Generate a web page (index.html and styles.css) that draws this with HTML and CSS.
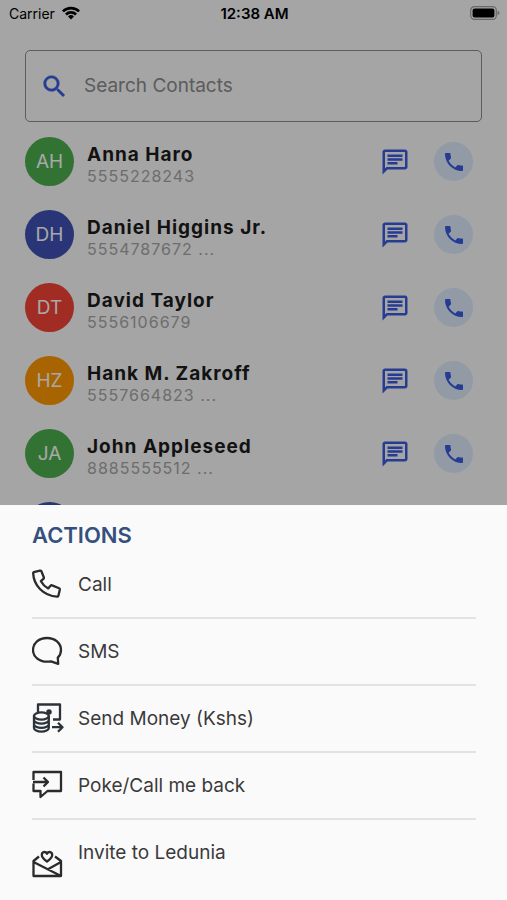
FILE: index.html
```
<!DOCTYPE html>
<html lang="en">
<head>
	<meta charset="UTF-8">
	<meta name="viewport" content="width=device-width, initial-scale=1">
	<title>Contacts</title>
	<link rel="stylesheet" href="styles.css">
</head>
<body>
	<!-- shared icons -->
	<svg class="sprite" aria-hidden="true">
		<symbol id="chat" viewBox="0 0 24 24">
			<path d="M4 4h16v12H5.17L4 17.17V4m0-2c-1.1 0-1.99.9-1.99 2L2 22l4-4h14c1.1 0 2-.9 2-2V4c0-1.1-.9-2-2-2H4zm2 10h8v2H6v-2zm0-3h12v2H6V9zm0-3h12v2H6V6z"/>
		</symbol>
		<symbol id="phone" viewBox="0 0 24 24">
			<path d="M6.62 10.79c1.44 2.83 3.76 5.14 6.59 6.59l2.2-2.2c.27-.27.67-.36 1.02-.24 1.12.37 2.33.57 3.57.57.55 0 1 .45 1 1V20c0 .55-.45 1-1 1-9.39 0-17-7.61-17-17 0-.55.45-1 1-1h3.5c.55 0 1 .45 1 1 0 1.25.2 2.45.57 3.57.11.35.03.74-.25 1.02l-2.2 2.2z"/>
		</symbol>
	</svg>
	<div class="app">
		<div class="screen">
			<header class="status">
				<div class="carrier">
					<span>Carrier</span>
					<svg class="wifi" viewBox="0 0 18 14">
						<path d="M0 4.4a13 13 0 0 1 18 0L16.2 6.3a10.4 10.4 0 0 0-14.4 0z"/>
						<path d="M3 7.5a8.7 8.7 0 0 1 12 0l-1.9 1.9a6 6 0 0 0-8.2 0z"/>
						<path d="M6 10.5a4.4 4.4 0 0 1 6 0L9 13.6z"/>
					</svg>
				</div>
				<time>12:38 AM</time>
				<div class="power">
					<svg class="battery" viewBox="0 0 30 14">
						<rect x=".7" y=".7" width="25.6" height="12.6" rx="3.6" fill="none" stroke="#a0a0a0" stroke-width="1.2"/>
						<rect x="2.6" y="2.6" width="21.8" height="8.8" rx="2"/>
						<path d="M27.6 4.8c2.4.8 2.4 3.6 0 4.4z" fill="#a0a0a0"/>
					</svg>
				</div>
			</header>
			<label class="search">
				<svg viewBox="0 0 24 24" aria-hidden="true">
					<path d="M15.5 14h-.79l-.28-.27A6.471 6.471 0 0 0 16 9.5 6.5 6.5 0 1 0 9.5 16c1.61 0 3.09-.59 4.23-1.57l.27.28v.79l5 4.99L20.49 19l-4.99-5zm-6 0C7.01 14 5 11.99 5 9.5S7.01 5 9.5 5 14 7.01 14 9.5 11.99 14 9.5 14z"/>
				</svg>
				<input type="text" placeholder="Search Contacts" aria-label="Search Contacts">
			</label>
			<ul class="contacts">
				<li>
					<span class="avatar green">AH</span>
					<div class="info"><h3>Anna Haro</h3><p>5555228243</p></div>
					<button class="msg" aria-label="Message Anna Haro"><svg><use href="#chat"/></svg></button>
					<button class="dial" aria-label="Call Anna Haro"><svg><use href="#phone"/></svg></button>
				</li>
				<li>
					<span class="avatar blue">DH</span>
					<div class="info"><h3>Daniel Higgins Jr.</h3><p>5554787672 ...</p></div>
					<button class="msg" aria-label="Message Daniel Higgins Jr."><svg><use href="#chat"/></svg></button>
					<button class="dial" aria-label="Call Daniel Higgins Jr."><svg><use href="#phone"/></svg></button>
				</li>
				<li>
					<span class="avatar red">DT</span>
					<div class="info"><h3>David Taylor</h3><p>5556106679</p></div>
					<button class="msg" aria-label="Message David Taylor"><svg><use href="#chat"/></svg></button>
					<button class="dial" aria-label="Call David Taylor"><svg><use href="#phone"/></svg></button>
				</li>
				<li>
					<span class="avatar orange">HZ</span>
					<div class="info"><h3>Hank M. Zakroff</h3><p>5557664823 ...</p></div>
					<button class="msg" aria-label="Message Hank M. Zakroff"><svg><use href="#chat"/></svg></button>
					<button class="dial" aria-label="Call Hank M. Zakroff"><svg><use href="#phone"/></svg></button>
				</li>
				<li>
					<span class="avatar green">JA</span>
					<div class="info"><h3>John Appleseed</h3><p>8885555512 ...</p></div>
					<button class="msg" aria-label="Message John Appleseed"><svg><use href="#chat"/></svg></button>
					<button class="dial" aria-label="Call John Appleseed"><svg><use href="#phone"/></svg></button>
				</li>
				<li>
					<span class="avatar blue"></span>
				</li>
			</ul>
			<div class="scrim"></div>
		</div>
		<section class="sheet">
			<h2>ACTIONS</h2>
			<ul class="actions">
				<li><button>
					<svg viewBox="0 1 32 32">
						<path d="M1.800 4.200 8 2.600q1-.2 1.400.7l2.400 6q.3 1-.4 1.600l-2.500 2.300q2.600 4.700 7.300 7.200l2.300-2.700q.7-.7 1.600-.3l7 2.900q.9.4.7 1.400l-1.400 6q-.3 1.100-1.400 1C11.500 27.700 1.600 17.600 1.200 5.400q-.1-1 .6-1.200z"/>
					</svg>
					<span>Call</span>
				</button></li>
				<li><button>
					<svg viewBox="0 1 32 32">
						<path d="M15 3C7 3 1 8.200 1 14.900S7 26.700 15 26.700q2.200 0 4-.3l7.200 2.400-.4-6.200q3.200-3.200 3.200-7.700C29 8.200 23 3 15 3z"/>
					</svg>
					<span>SMS</span>
				</button></li>
				<li><button>
					<svg class="money" viewBox="0 1 32 32">
						<path d="M6 10V2.500h22V17.500h-7M2 13.500V26c0 2 3.300 3.600 7.400 3.600s7.400-1.600 7.400-3.600V13.500M2 18c0 2 3.300 3.600 7.400 3.600s7.400-1.600 7.400-3.600M2 22.200c0 2 3.300 3.600 7.400 3.600s7.400-1.600 7.400-3.600M20 25.200h10M26 20.700l4.500 4.500-4.500 4.500"/>
						<ellipse cx="9.400" cy="14" rx="7.400" ry="3.600"/>
						<circle cx="17" cy="10" r="1.600" fill="#2b3338"/>
					</svg>
					<span>Send Money (Kshs)</span>
				</button></li>
				<li><button>
					<svg viewBox="0 1 32 32">
						<path d="M1.500 11V3H29v19H15.500L8.500 28v-6h-7v-7.500M1 13h15M11.500 8.500 16 13l-4.500 4.500"/>
					</svg>
					<span>Poke/Call me back</span>
				</button></li>
				<li><button>
					<!-- tall box, the envelope hangs below the text line -->
					<svg class="tall" viewBox="0 0 32 52">
						<path d="M7 29.500 1.500 34v15H29V34l-6-4.500M1.500 35 29 49M29 35l-13.500 7.500M15 34.500c-3-2.200-5.200-4.300-5.200-6.600 0-3.200 3.700-4 5.200-1.200 1.500-2.800 5.200-2 5.200 1.200 0 2.300-2.200 4.400-5.200 6.600z"/>
					</svg>
					<span>Invite to Ledunia</span>
				</button></li>
			</ul>
		</section>
	</div>
</body>
</html>
```
FILE: styles.css
```
*{margin: 0;padding: 0;box-sizing: border-box;list-style: none}
body{
	font-family: Inter, "Liberation Sans", sans-serif;
	background: #fafafa;
}
button{
	border: 0;
	background: none;
	font: inherit;
	color: inherit;
	cursor: pointer;
}
svg{
	display: block;
	flex: none;
}
.sprite{
	position: absolute;
	width: 0;
	height: 0;
}
.app{
	display: flex;
	flex-direction: column;
	height: 100vh;
}

/* contacts, dimmed while the sheet is open */
.screen{
	position: relative;
	flex: 1;
	min-height: 0;
	overflow: hidden;
}
.scrim{
	position: absolute;
	top: 0;
	right: 0;
	bottom: 0;
	left: 0;
	background: rgba(0,0,0,0.34);
}
.status{
	display: grid;
	grid-template-columns: 1fr auto 1fr;
	align-items: center;
	height: 26px;
	padding: 0 7px 0 9px;
	font-size: 14px;
}
.status time{
	font-size: 15px;
	font-weight: 600;
}
.carrier{
	display: flex;
	align-items: center;
	gap: 7px;
}
.wifi{
	width: 18px;
	height: 14px;
}
.power{
	display: flex;
	justify-content: flex-end;
}
.battery{
	width: 30px;
	height: 14px;
}
.search{
	display: flex;
	align-items: center;
	gap: 15px;
	height: 72px;
	margin: 24px 25px 15px;
	padding: 0 14px;
	border: 1px solid #8c8c8c;
	border-radius: 5px;
}
.search svg{
	width: 29px;
	height: 29px;
	fill: #3a5be0;
	stroke: #3a5be0;
	stroke-width: .4;
}
.search input{
	flex: 1;
	min-width: 0;
	border: 0;
	outline: 0;
	background: none;
	font: 19px/24px Inter, "Liberation Sans", sans-serif;
	color: #222;
}
.search input::placeholder{
	color: #8c8c8c;
	opacity: 1;
}
.contacts li{
	display: flex;
	align-items: center;
	height: 49px;
	margin: 0 34px 24px 25px;
}
.avatar{
	flex: none;
	width: 49px;
	height: 49px;
	border-radius: 50%;
	color: #fff;
	font-size: 19px;
	line-height: 49px;
	text-align: center;
}
.green{background: #4caf50}
.blue{background: #3f51b5}
.red{background: #f44336}
.orange{background: #ff9800}
.info{
	flex: 1;
	min-width: 0;
	padding: 7px 0 0 13px;
	letter-spacing: 1px;
	white-space: nowrap;
}
.info h3{
	font-size: 19px;
	line-height: 22px;
	font-weight: 700;
	color: #1c1c1c;
}
.info p{
	font-size: 16px;
	line-height: 21px;
	color: #a6a6a6;
}
.msg{
	margin-right: 24px;
}
.msg svg{
	width: 30px;
	height: 30px;
	fill: #3a5be0;
}
.dial{
	display: flex;
	align-items: center;
	justify-content: center;
	width: 39px;
	height: 39px;
	border-radius: 50%;
	background: #dceafa;
}
.dial svg{
	width: 24px;
	height: 24px;
	fill: #3a5be0;
}

/* bottom sheet */
.sheet{
	flex: none;
	padding: 16px 31px 15px 32px;
	background: #fafafa;
}
.sheet h2{
	margin-bottom: 3px;
	font-size: 22px;
	line-height: 28px;
	font-weight: 600;
	color: #35507c;
}
.actions li{
	border-bottom: 2px solid #e2e2e2;
}
.actions li:last-child{
	border-bottom: 0;
}
.actions button{
	display: flex;
	align-items: center;
	gap: 14px;
	width: 100%;
	height: 65px;
	font-size: 19px;
	line-height: 24px;
	color: #3a3a3a;
	text-align: left;
}
.actions svg{
	width: 32px;
	height: 32px;
	fill: none;
	stroke: #2b2b2b;
	stroke-width: 2.3;
	stroke-linejoin: round;
}
.actions .money{
	stroke: #2b3338;
}
.actions .tall{
	height: 52px;
}
```
